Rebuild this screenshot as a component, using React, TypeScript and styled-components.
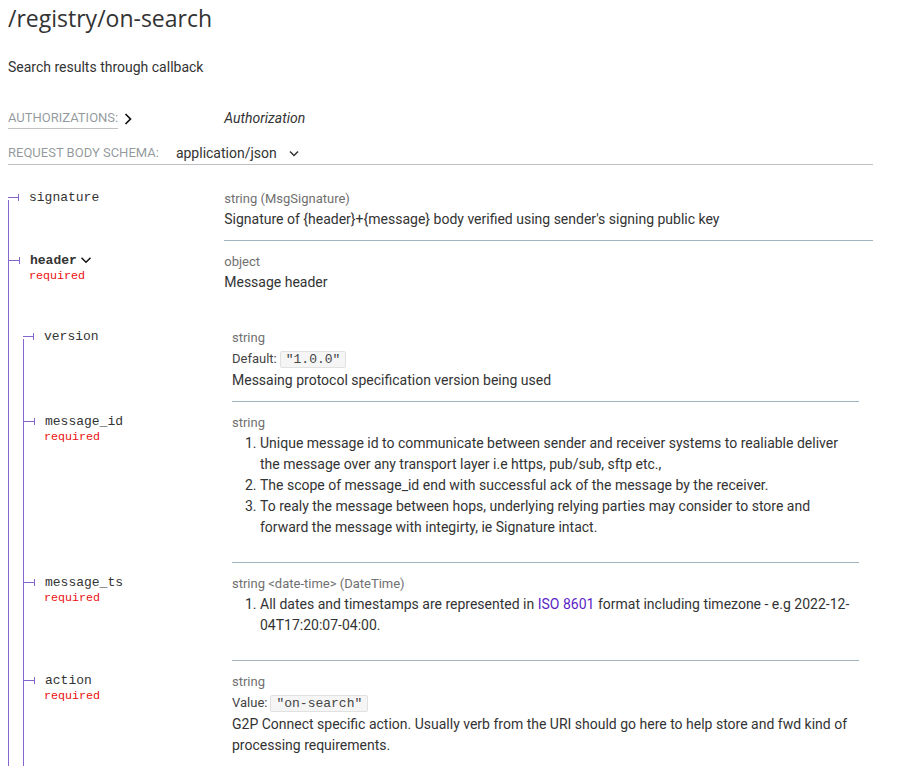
import React from 'react';
import styled, { createGlobalStyle, css } from 'styled-components';

const LINES = '#8566cc';
const MONO = '"Liberation Mono", Courier, monospace';

const GlobalStyle = createGlobalStyle`
  html, body { margin: 0; padding: 0; background: #fff; }
  body { font-family: Roboto, "Liberation Sans", sans-serif; }
`;

const Page = styled.div`
  padding: 0 28px 0 8px;
  font-family: Roboto, "Liberation Sans", sans-serif;
  font-size: 14px;
  line-height: 21px;
  color: #333;
`;

const Title = styled.h2`
  margin: 0;
  font-family: "Open Sans", sans-serif;
  font-weight: 400;
  font-size: 23px;
  line-height: 36px;
  color: #333;
`;

const Summary = styled.p`
  margin: 21px 0 0;
`;

const AuthRow = styled.div`
  display: flex;
  margin-top: 30px;
`;

const AuthHeaderColumn = styled.div`
  flex: 1 1 auto;
  display: flex;
  align-items: center;
`;

const UnderlinedLabel = styled.span`
  border-bottom: 1px solid rgba(38, 50, 56, 0.3);
  color: rgba(38, 50, 56, 0.5);
  text-transform: uppercase;
  font-size: 13px;
  line-height: 20px;
`;

const SecuritiesColumn = styled.div`
  width: 75%;
  flex: none;
  font-style: italic;
  line-height: 20px;
`;

const IconWrap = styled.span<{ $w: number; $h: number; $ml?: number }>`
  display: inline-flex;
  width: ${p => p.$w}px;
  height: ${p => p.$h}px;
  margin-left: ${p => p.$ml ?? 0}px;
  svg { width: 100%; height: 100%; display: block; }
`;

const SchemaHeader = styled.div`
  margin-top: 14px;
  border-bottom: 1px solid rgba(38, 50, 56, 0.3);
  display: flex;
  align-items: center;
  line-height: 20px;
  padding-bottom: 1px;
`;

const SchemaLabel = styled.span`
  color: rgba(38, 50, 56, 0.5);
  text-transform: uppercase;
  font-size: 13px;
`;

const Dropdown = styled.span`
  display: inline-flex;
  align-items: center;
  margin-left: 17px;
  font-size: 14px;
  color: #333;
`;

const Table = styled.div`
  margin-top: 13px;
`;

const PropRow = styled.div`
  display: grid;
  grid-template-columns: 25% 75%;
`;

type Pos = 'first' | 'middle' | 'last';

const NameCell = styled.div<{ $pos: Pos }>`
  box-sizing: border-box;
  padding: 10px 10px 10px 0;
  line-height: 20px;
  white-space: nowrap;
  font-size: 13px;
  font-family: ${MONO};
  color: #333;
  border-left: 1px solid ${LINES};
  ${p =>
    p.$pos === 'first' &&
    css`
      border-left-width: 0;
      background-image: linear-gradient(
        to bottom,
        transparent 0%,
        transparent 22px,
        ${LINES} 22px,
        ${LINES} 100%
      );
      background-position: top left;
      background-repeat: no-repeat;
      background-size: 1px 100%;
    `}
`;

const Bullet = styled.span`
  margin-right: 10px;
  &::before {
    content: '';
    display: inline-block;
    vertical-align: middle;
    width: 10px;
    height: 1px;
    background: ${LINES};
  }
  &::after {
    content: '';
    display: inline-block;
    vertical-align: middle;
    width: 1px;
    height: 7px;
    background: ${LINES};
  }
`;

const PropName = styled.span<{ $bold?: boolean }>`
  font-weight: ${p => (p.$bold ? 700 : 400)};
`;

const Chevron = styled.svg`
  width: 18px;
  height: 18px;
  vertical-align: middle;
  position: relative;
  top: -1px;
`;

const Required = styled.div`
  color: #ec0f0f;
  font-size: 0.9em;
  font-weight: normal;
  margin-left: 20px;
  line-height: 1;
`;

const DetailsCell = styled.div<{ $expanded?: boolean }>`
  padding: 10px 0;
  border-bottom: ${p => (p.$expanded ? 'none' : '1px solid #9fb4be')};
  min-width: 0;
`;

const TypeLine = styled.div`
  color: #707070;
  font-size: 13px;
`;

const FieldLine = styled.div`
  font-size: 13px;
  color: #444;
`;

const ExampleValue = styled.span`
  font-family: ${MONO};
  font-size: 13px;
  color: #444;
  padding: 0 5px;
  margin-left: 3px;
  border: 1px solid rgba(51, 51, 51, 0.1);
  background: rgba(51, 51, 51, 0.05);
  border-radius: 2px;
`;

const Desc = styled.div`
  p {
    margin: 0;
  }
`;

const List = styled.ol`
  margin: 0 0 14px;
  padding-left: 28px;
`;

const Link = styled.a`
  color: #5b1fc7;
  text-decoration: none;
`;

const NestedCell = styled.div`
  grid-column: 1 / span 2;
  border-left: 1px solid ${LINES};
`;

const InnerWrap = styled.div`
  padding: 14px;
`;

const ShelfDown = () => (
  <Chevron viewBox="0 0 24 24" aria-hidden>
    <path d="M17.3 8.3L12 13.6 6.7 8.3 5.3 9.7l6.7 6.7 6.7-6.7z" fill="#111" />
  </Chevron>
);

type PropDef = {
  name: string;
  bold?: boolean;
  expandable?: boolean;
  required?: boolean;
  expanded?: boolean;
  pos: Pos;
  details: React.ReactNode;
};

const Property: React.FC<PropDef> = ({ name, bold, expandable, required, expanded, pos, details }) => (
  <PropRow>
    <NameCell $pos={pos}>
      <Bullet />
      <PropName $bold={bold}>{name}</PropName>
      {expandable && <ShelfDown />}
      {required && <Required>required</Required>}
    </NameCell>
    <DetailsCell $expanded={expanded}>{details}</DetailsCell>
  </PropRow>
);

export default function App() {
  return (
    <Page>
      <GlobalStyle />
      <Title>/registry/on-search</Title>
      <Summary>Search results through callback</Summary>

      <AuthRow>
        <AuthHeaderColumn>
          <UnderlinedLabel>Authorizations:</UnderlinedLabel>
          <IconWrap $w={20} $h={20}>
            <svg viewBox="0 0 24 24" aria-hidden>
              <path d="M8.3 6.7L13.6 12 8.3 17.3 9.7 18.7 16.4 12 9.7 5.3z" fill="#111" />
            </svg>
          </IconWrap>
        </AuthHeaderColumn>
        <SecuritiesColumn>Authorization</SecuritiesColumn>
      </AuthRow>

      <SchemaHeader>
        <SchemaLabel>Request Body schema:</SchemaLabel>
        <Dropdown>
          application/json
          <IconWrap $w={10} $h={7} $ml={12}>
            <svg viewBox="0 0 10 7" aria-hidden>
              <polyline points="1,1.5 5,5.5 9,1.5" fill="none" stroke="#333" strokeWidth="1.5" />
            </svg>
          </IconWrap>
        </Dropdown>
      </SchemaHeader>

      <Table>
        <Property
          pos="first"
          name="signature"
          details={
            <>
              <TypeLine>string (MsgSignature)</TypeLine>
              <Desc>
                <p>Signature of {'{header}'}+{'{message}'} body verified using sender's signing public key</p>
              </Desc>
            </>
          }
        />
        <Property
          pos="middle"
          name="header"
          bold
          expandable
          required
          expanded
          details={
            <>
              <TypeLine>object</TypeLine>
              <Desc>
                <p>Message header</p>
              </Desc>
            </>
          }
        />
        <PropRow>
          <NestedCell>
            <InnerWrap>
              <Property
                pos="first"
                name="version"
                details={
                  <>
                    <TypeLine>string</TypeLine>
                    <FieldLine>
                      Default:<ExampleValue>"1.0.0"</ExampleValue>
                    </FieldLine>
                    <Desc>
                      <p>Messaing protocol specification version being used</p>
                    </Desc>
                  </>
                }
              />
              <Property
                pos="middle"
                name="message_id"
                required
                details={
                  <>
                    <TypeLine>string</TypeLine>
                    <Desc>
                      <List>
                        <li>
                          Unique message id to communicate between sender and receiver systems to realiable deliver
                          the message over any transport layer i.e https, pub/sub, sftp etc.,
                        </li>
                        <li>The scope of message_id end with successful ack of the message by the receiver.</li>
                        <li>
                          To realy the message between hops, underlying relying parties may consider to store and
                          forward the message with integirty, ie Signature intact.
                        </li>
                      </List>
                    </Desc>
                  </>
                }
              />
              <Property
                pos="middle"
                name="message_ts"
                required
                details={
                  <>
                    <TypeLine>string &lt;date-time&gt; (DateTime)</TypeLine>
                    <Desc>
                      <List>
                        <li>
                          All dates and timestamps are represented in <Link href="#iso">ISO 8601</Link> format
                          including timezone - e.g 2022-12-04T17:20:07-04:00.
                        </li>
                      </List>
                    </Desc>
                  </>
                }
              />
              <Property
                pos="middle"
                name="action"
                required
                details={
                  <>
                    <TypeLine>string</TypeLine>
                    <FieldLine>
                      Value:<ExampleValue>"on-search"</ExampleValue>
                    </FieldLine>
                    <Desc>
                      <p>
                        G2P Connect specific action. Usually verb from the URI should go here to help store and fwd
                        kind of processing requirements.
                      </p>
                    </Desc>
                  </>
                }
              />
            </InnerWrap>
          </NestedCell>
        </PropRow>
      </Table>
    </Page>
  );
}
